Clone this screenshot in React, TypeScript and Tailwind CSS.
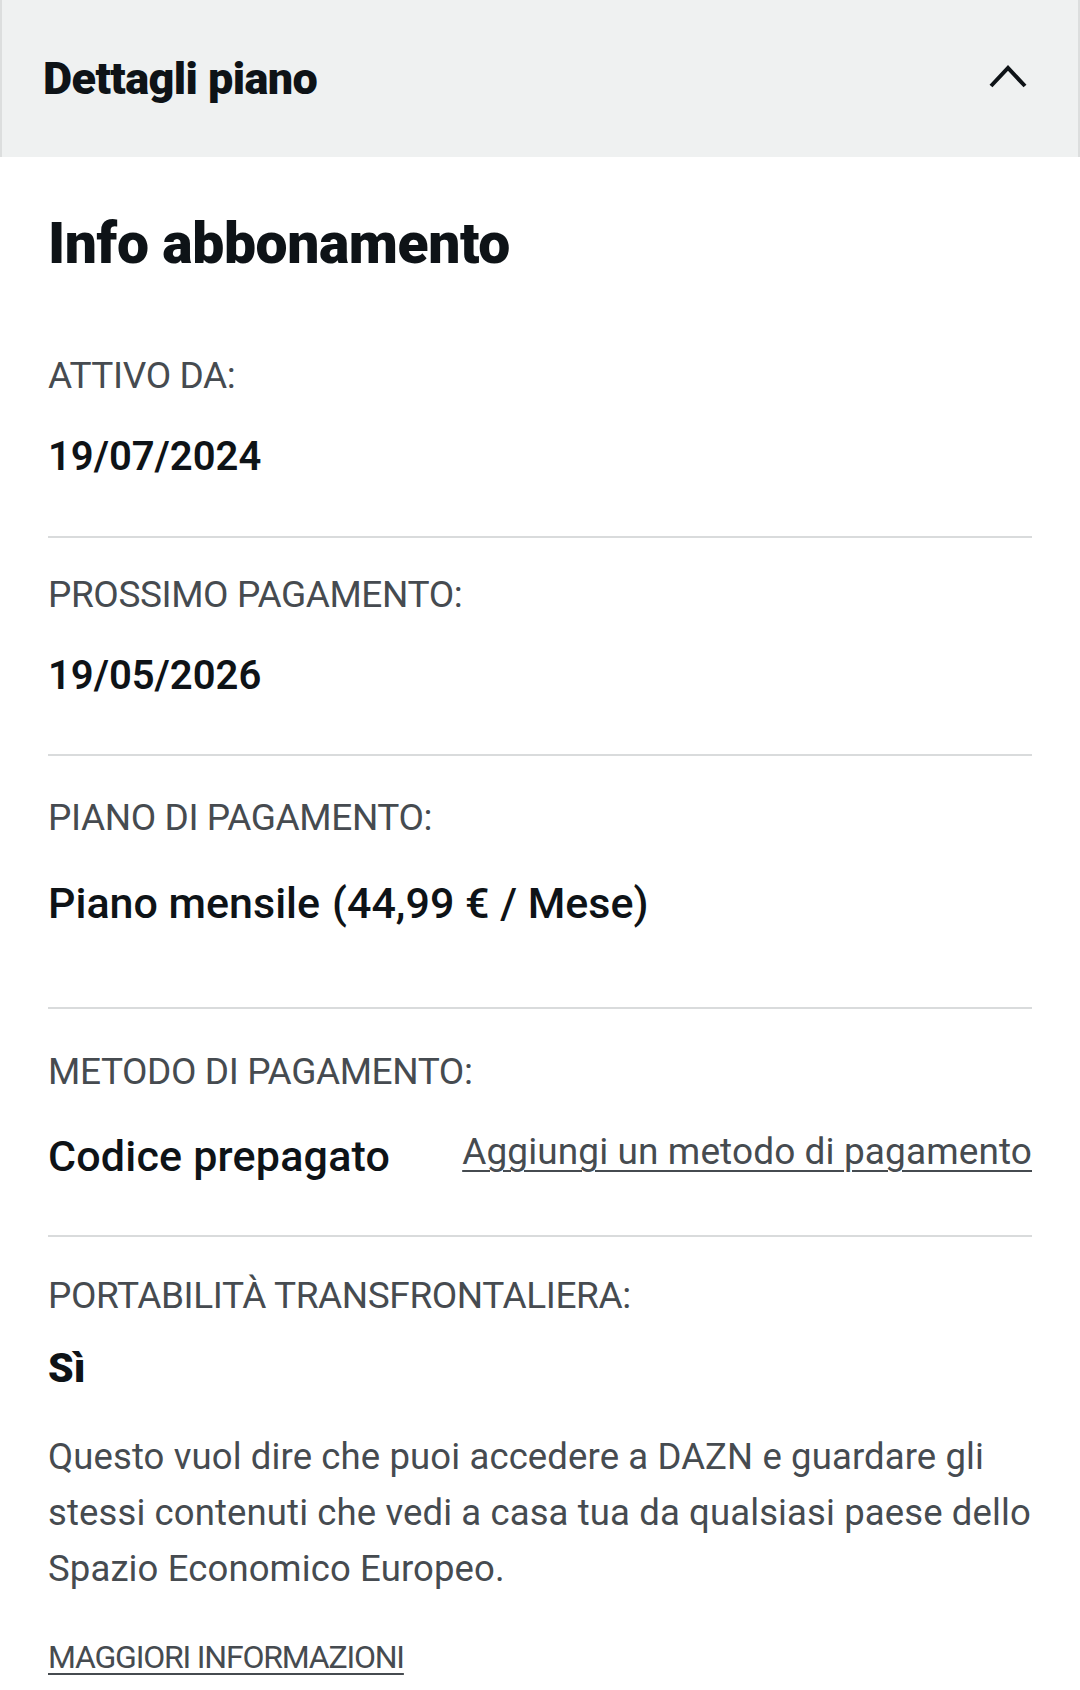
const font = { fontFamily: 'Roboto, "Liberation Sans", sans-serif' };

function Label({ children }: { children: React.ReactNode }) {
  return (
    <div className="text-[37px] leading-[44px] tracking-[-0.4px] text-[#464b50] uppercase">
      {children}
    </div>
  );
}

export default function App() {
  return (
    <div className="w-[1080px] min-h-[1690px] bg-white text-[#0e1317]" style={font}>
      {/* accordion header */}
      <div className="h-[157px] bg-[#eff1f1] border-x-2 border-[#dcdede] flex items-center justify-between pl-[41px] pr-[50px]">
        <h2 className="text-[45px] leading-none font-black tracking-[-0.6px] text-[#0e1317]">Dettagli piano</h2>
        <svg width="40" height="26" viewBox="0 0 40 26" fill="none" className="mt-[-4px]">
          <path d="M3 22 L20 4 L37 22" stroke="#0e1317" strokeWidth="4" strokeLinecap="butt" strokeLinejoin="miter" />
        </svg>
      </div>

      <div className="px-[48px] pt-[59px] pb-[20px]">
        <h1 className="text-[57px] leading-[56px] font-black tracking-[-0.4px]">Info abbonamento</h1>

        {/* attivo da */}
        <div className="pt-[82px] pb-[55px] border-b-2 border-[#d9dbdc]">
          <Label>Attivo da:</Label>
          <div className="mt-[35px] text-[40px] leading-[48px] font-semibold">19/07/2024</div>
        </div>

        {/* prossimo pagamento */}
        <div className="pt-[35px] pb-[54px] border-b-2 border-[#d9dbdc]">
          <Label>Prossimo pagamento:</Label>
          <div className="mt-[35px] text-[40px] leading-[48px] font-semibold">19/05/2026</div>
        </div>

        {/* piano */}
        <div className="pt-[40px] pb-[78px] border-b-2 border-[#d9dbdc]">
          <Label>Piano di pagamento:</Label>
          <div className="mt-[37px] text-[43px] leading-[52px] font-medium flex gap-[12px]">
            <span>Piano mensile</span>
            <span>(44,99 € / Mese)</span>
          </div>
        </div>

        {/* metodo */}
        <div className="pt-[41px] pb-[53px] border-b-2 border-[#d9dbdc]">
          <Label>Metodo di pagamento:</Label>
          <div className="mt-[36px] flex items-start justify-between">
            <span className="text-[43px] leading-[52px] font-medium tracking-[0.2px]">Codice prepagato</span>
            <a className="text-[37px] leading-[44px] tracking-[0.1px] text-[#464b50] underline decoration-2 underline-offset-[6px]">
              Aggiungi un metodo di pagamento
            </a>
          </div>
        </div>

        {/* portabilita */}
        <div className="pt-[37px]">
          <Label>Portabilità transfrontaliera:</Label>
          <div className="mt-[26px] text-[41px] leading-[48px] font-black">Sì</div>
          <p className="mt-[37px] text-[36.5px] leading-[56px] text-[#464b50] tracking-[0.12px]">
            Questo vuol dire che puoi accedere a DAZN e guardare gli stessi contenuti che vedi a casa tua da
            qualsiasi paese dello Spazio Economico Europeo.
          </p>
          <a className="block mt-[40px] text-[32px] leading-[40px] tracking-[-1.2px] text-[#464b50] underline decoration-2 underline-offset-[5px]">
            MAGGIORI INFORMAZIONI
          </a>
        </div>
      </div>
    </div>
  );
}
